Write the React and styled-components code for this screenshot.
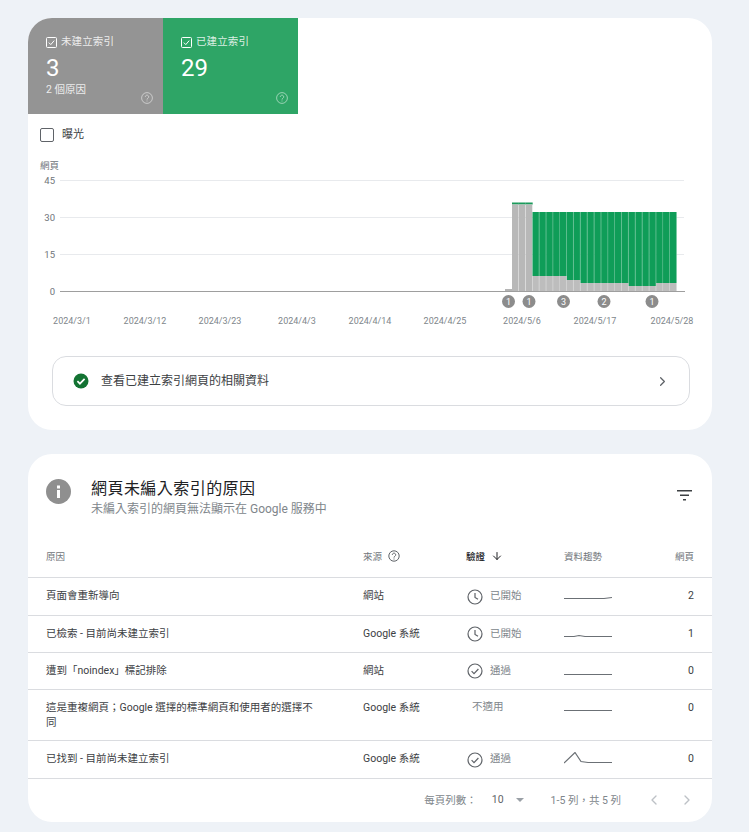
import styled, { createGlobalStyle } from "styled-components";
import { ArrowDown, ChevronLeft, ChevronRight } from "lucide-react";

const GlobalStyle = createGlobalStyle`
  body {
    margin: 0;
    background: #eef2f7;
    font-family: Roboto, "Noto Sans CJK TC", sans-serif;
    color: #3c4043;
  }
`;

const Page = styled.div`
  width: 684px;
  margin-left: 28px;
  padding: 18px 0 10px;
  display: flex;
  flex-direction: column;
  gap: 24px;
`;

const Card = styled.section`
  background: #fff;
  border-radius: 24px;
  overflow: hidden;
`;

const Tiles = styled.div`
  display: flex;
`;

const Tile = styled.div`
  position: relative;
  width: 135px;
  height: 96px;
  box-sizing: border-box;
  padding: 15px 18px 0;
  color: #fff;
  background: ${(p) => p.$bg};
`;

const TileLabel = styled.div`
  display: flex;
  align-items: center;
  gap: 4px;
  font-size: 10.5px;
  line-height: 18px;
  letter-spacing: 0.1px;
  color: rgba(255, 255, 255, 0.85);
`;

const TileValue = styled.div`
  font-size: 24px;
  line-height: 30px;
  margin-top: 2px;
`;

const TileNote = styled.div`
  font-size: 10.5px;
  line-height: 14px;
  color: rgba(255, 255, 255, 0.85);
`;

const TileHelp = styled.div`
  position: absolute;
  right: 10px;
  bottom: 10px;
  display: flex;
`;

const MetricRow = styled.label`
  display: flex;
  align-items: center;
  gap: 8px;
  padding: 12px 12px 0;
  font-size: 11px;
  line-height: 16px;
  color: #3c4043;
`;

const MetricText = styled.span`
  padding-top: 1px;
`;

const Box = styled.span`
  width: 12px;
  height: 12px;
  border: 1px solid #5f6368;
  border-radius: 2px;
`;

const Chart = styled.svg`
  display: block;
  margin-top: 7px;
  text {
    font-family: Roboto, "Noto Sans CJK TC", sans-serif;
  }
`;

const LinkRow = styled.div`
  height: 48px;
  margin: 26px 22px 24px 24px;
  padding: 0 19px 0 20px;
  display: flex;
  align-items: center;
  border: 1px solid #dadce0;
  border-radius: 14px;
  font-size: 12px;
  color: #3c4043;
`;

const LinkText = styled.span`
  flex: 1;
  margin-left: 12px;
  padding-bottom: 3px;
`;

const Header = styled.header`
  height: 81px;
  padding: 23px 20px 0 18px;
  box-sizing: border-box;
  display: flex;
  align-items: flex-start;
`;

const InfoIcon = styled.svg`
  margin-top: 2px;
`;

const HeaderText = styled.div`
  flex: 1;
  margin-left: 20px;
`;

const Title = styled.h2`
  margin: 0;
  font-size: 16px;
  font-weight: 400;
  line-height: 24px;
  letter-spacing: 0.45px;
  color: #202124;
`;

const Subtitle = styled.div`
  font-size: 12px;
  line-height: 17px;
  color: #80868b;
`;

const FilterIcon = styled.svg`
  margin-top: 13px;
`;

const Row = styled.div`
  display: grid;
  grid-template-columns: 317px 103px 98px 1fr 30px;
  align-items: ${(p) => (p.$top ? "start" : "center")};
  min-height: ${(p) => p.$h}px;
  box-sizing: border-box;
  padding: ${(p) => (p.$top ? "10px 18px 0" : "0 18px 2px")};
  border-bottom: 1px solid #dadce0;
  font-size: 10.5px;
  line-height: 15px;
  color: #3c4043;
`;

const HeadRow = styled(Row)`
  padding: 0 18px;
  color: #70757a;
  font-size: 9.5px;
`;

const Reason = styled.div`
  padding-right: 40px;
`;

const HeadCell = styled.div`
  display: flex;
  align-items: center;
  gap: 6px;
  color: ${(p) => (p.$active ? "#202124" : "inherit")};
  font-weight: ${(p) => (p.$active ? 500 : 400)};
`;

const Status = styled.div`
  display: flex;
  align-items: center;
  gap: 7px;
  color: #80868b;
  padding-left: ${(p) => (p.$plain ? "6px" : "1px")};
  margin-top: ${(p) => (p.$plain ? "-1px" : "0")};
  svg {
    margin-top: 2px;
  }
`;

const SparkBox = styled.div`
  display: flex;
  margin-top: ${(p) => (p.$top ? "2px" : "0")};
`;

const Pages = styled.div`
  text-align: right;
`;

const Pager = styled.div`
  height: 43px;
  display: flex;
  align-items: center;
  justify-content: flex-end;
  padding: 0 17px 2px 0;
  box-sizing: border-box;
  font-size: 10.5px;
  color: #80868b;
`;

const PerPage = styled.span`
  color: #5f6368;
  margin-left: 15px;
`;

const Caret = styled.span`
  width: 0;
  height: 0;
  margin: 0 27px 0 12px;
  border-left: 4px solid transparent;
  border-right: 4px solid transparent;
  border-top: 4px solid #9aa0a6;
`;

const PagerArrows = styled.div`
  display: flex;
  gap: 17px;
  margin-left: 25px;
  color: #bdc1c6;
`;

const TileCheck = () => (
  <svg width="11" height="11" viewBox="0 0 11 11" fill="none" stroke="#fff">
    <rect x="0.5" y="0.5" width="10" height="10" rx="1" />
    <path d="M2.8 5.6l2 2 3.4-4" />
  </svg>
);

const HelpIcon = () => (
  <svg width="12" height="12" viewBox="0 0 12 12" fill="none" stroke="rgba(255,255,255,.5)">
    <circle cx="6" cy="6" r="5.4" />
    <path d="M4.3 4.8a1.7 1.7 0 1 1 2.7 1.4c-.6.4-1 .7-1 1.4" />
    <path d="M6 8.5v1" />
  </svg>
);

const SmallHelp = () => (
  <svg width="12" height="12" viewBox="0 0 12 12" fill="none" stroke="#5f6368">
    <circle cx="6" cy="6" r="5.2" />
    <path d="M4.3 4.8a1.7 1.7 0 1 1 2.7 1.4c-.6.4-1 .7-1 1.4" />
    <path d="M6 8.5v1" />
  </svg>
);

const ClockIcon = () => (
  <svg width="16" height="16" viewBox="0 0 16 16" fill="none" stroke="#5f6368" strokeWidth="1.2">
    <circle cx="8" cy="8" r="7" />
    <path d="M8 4v4.4l3 1.8" />
  </svg>
);

const DoneIcon = () => (
  <svg width="16" height="16" viewBox="0 0 16 16" fill="none" stroke="#5f6368" strokeWidth="1.2">
    <circle cx="8" cy="8" r="7" />
    <path d="M4.6 8.2l2.4 2.4 4.4-4.6" />
  </svg>
);

const Spark = ({ d, top }) => (
  <SparkBox $top={top}>
    <svg width="48" height="14" viewBox="0 0 48 14" fill="none" stroke="#6b7075" strokeWidth="1.2">
      <path d={d} />
    </svg>
  </SparkBox>
);

const bars = [];
const greyTop = (x) => {
  if (x < 566) return 276;
  if (x < 580) return 280;
  if (x < 628) return 283;
  if (x < 655) return 286;
  return 283;
};
for (let i = 0; i < 21; i++) bars.push(532.5 + i * 6.87);

const yTicks = [
  ["45", 180],
  ["30", 217],
  ["15", 254],
];
const dates = [
  ["2024/3/1", 72],
  ["2024/3/12", 145],
  ["2024/3/23", 220],
  ["2024/4/3", 297],
  ["2024/4/14", 370],
  ["2024/4/25", 445],
  ["2024/5/6", 522],
  ["2024/5/17", 595],
  ["2024/5/28", 672],
];
const markers = [
  ["1", 508.5],
  ["1", 529],
  ["3", 563.5],
  ["2", 604],
  ["1", 652],
];

// chart is drawn in page x, the card starts at 28 and the svg at y 150
const IndexChart = () => (
  <Chart width="684" height="180" viewBox="28 150 684 180">
    <text x="40" y="169" fontSize="9.5" fill="#70757a">網頁</text>
    {yTicks.map(([label, y]) => (
      <g key={label}>
        <line x1="60" x2="684" y1={y + 0.5} y2={y + 0.5} stroke="#e8eaed" />
        <text x="55" y={y + 3.5} fontSize="9.5" fill="#70757a" textAnchor="end">{label}</text>
      </g>
    ))}
    <text x="55" y="294.5" fontSize="9.5" fill="#70757a" textAnchor="end">0</text>
    <rect x="505" y="289" width="7" height="2" fill="#b5b5b5" />
    {[512, 518.9, 525.8].map((x) => (
      <g key={x}>
        <rect x={x} y="202.5" width="6.9" height="2" fill="#1a9a5b" />
        <rect x={x} y="204.5" width="6.5" height="87" fill="#b8b8b8" />
      </g>
    ))}
    {bars.map((x) => (
      <g key={x}>
        <rect x={x} y="212" width="6.87" height={greyTop(x) - 212} fill="#0f9d58" />
        <rect x={x} y={greyTop(x)} width="6.87" height={291 - greyTop(x)} fill="#bdbdbd" />
        <line x1={x + 6.6} x2={x + 6.6} y1="212" y2="291" stroke="#fff" strokeOpacity=".3" />
      </g>
    ))}
    <line x1="60" x2="685" y1="291.5" y2="291.5" stroke="#9e9e9e" />
    {markers.map(([n, x]) => (
      <g key={x}>
        <circle cx={x} cy="301.5" r="6.5" fill="#8c8c8c" />
        <text x={x} y="304.5" fontSize="9" fill="#fff" textAnchor="middle">{n}</text>
      </g>
    ))}
    {dates.map(([label, x]) => (
      <text key={label} x={x} y="324" fontSize="9" fill="#80868b" textAnchor="middle">{label}</text>
    ))}
  </Chart>
);

const rows = [
  { h: 38, reason: "頁面會重新導向", source: "網站", status: "已開始", icon: <ClockIcon />, spark: "M0 9.5H40L48 8.5", pages: 2 },
  { h: 37, reason: "已檢索 - 目前尚未建立索引", source: "Google 系統", status: "已開始", icon: <ClockIcon />, spark: "M0 10.5H10L15 9.5L21 10.5H48", pages: 1 },
  { h: 37, reason: "遭到「noindex」標記排除", source: "網站", status: "通過", icon: <DoneIcon />, spark: "M0 11.5H48", pages: 0 },
  { h: 51, reason: "這是重複網頁；Google 選擇的標準網頁和使用者的選擇不同", source: "Google 系統", status: "不適用", spark: "M0 8.5H48", pages: 0, plain: true },
  { h: 38, reason: "已找到 - 目前尚未建立索引", source: "Google 系統", status: "通過", icon: <DoneIcon />, spark: "M0 11L11 0.5L17 9.5L24 10.5H48", pages: 0 },
];

export default function App() {
  return (
    <>
      <GlobalStyle />
      <Page>
        <Card>
          <Tiles>
            <Tile $bg="#949494">
              <TileLabel><TileCheck />未建立索引</TileLabel>
              <TileValue>3</TileValue>
              <TileNote>2 個原因</TileNote>
              <TileHelp><HelpIcon /></TileHelp>
            </Tile>
            <Tile $bg="#2ea566">
              <TileLabel><TileCheck />已建立索引</TileLabel>
              <TileValue>29</TileValue>
              <TileHelp><HelpIcon /></TileHelp>
            </Tile>
          </Tiles>
          <MetricRow><Box /><MetricText>曝光</MetricText></MetricRow>
          <IndexChart />
          <LinkRow>
            <svg width="16" height="16" viewBox="0 0 16 16">
              <circle cx="8" cy="8" r="7.5" fill="#137333" />
              <path d="M4.4 8.2l2.5 2.5 4.7-4.9" fill="none" stroke="#fff" strokeWidth="1.7" />
            </svg>
            <LinkText>查看已建立索引網頁的相關資料</LinkText>
            <ChevronRight size={15} color="#5f6368" />
          </LinkRow>
        </Card>
        <Card>
          <Header>
            <InfoIcon width="25" height="25" viewBox="0 0 25 25">
              <circle cx="12.5" cy="12.5" r="12.5" fill="#8f8f8f" />
              <rect x="11" y="11" width="3" height="8" fill="#fff" />
              <rect x="11" y="6.5" width="3" height="3" fill="#fff" />
            </InfoIcon>
            <HeaderText>
              <Title>網頁未編入索引的原因</Title>
              <Subtitle>未編入索引的網頁無法顯示在 Google 服務中</Subtitle>
            </HeaderText>
            <FilterIcon width="15" height="11" viewBox="0 0 15 11" fill="#3c4043">
              <rect y="0" width="15" height="1.5" />
              <rect x="3" y="4.5" width="9" height="1.5" />
              <rect x="6" y="9" width="3" height="1.5" />
            </FilterIcon>
          </Header>
          <HeadRow $h={43}>
            <div>原因</div>
            <HeadCell>來源 <SmallHelp /></HeadCell>
            <HeadCell $active>驗證 <ArrowDown size={12} /></HeadCell>
            <div>資料趨勢</div>
            <Pages>網頁</Pages>
          </HeadRow>
          {rows.map((r) => (
            <Row key={r.reason} $h={r.h} $top={r.plain}>
              <Reason>{r.reason}</Reason>
              <div>{r.source}</div>
              <Status $plain={r.plain}>{r.icon}{r.status}</Status>
              <Spark d={r.spark} top={r.plain} />
              <Pages>{r.pages}</Pages>
            </Row>
          ))}
          <Pager>
            每頁列數：
            <PerPage>10</PerPage>
            <Caret />
            1-5 列，共 5 列
            <PagerArrows>
              <ChevronLeft size={16} />
              <ChevronRight size={16} />
            </PagerArrows>
          </Pager>
        </Card>
      </Page>
    </>
  );
}
